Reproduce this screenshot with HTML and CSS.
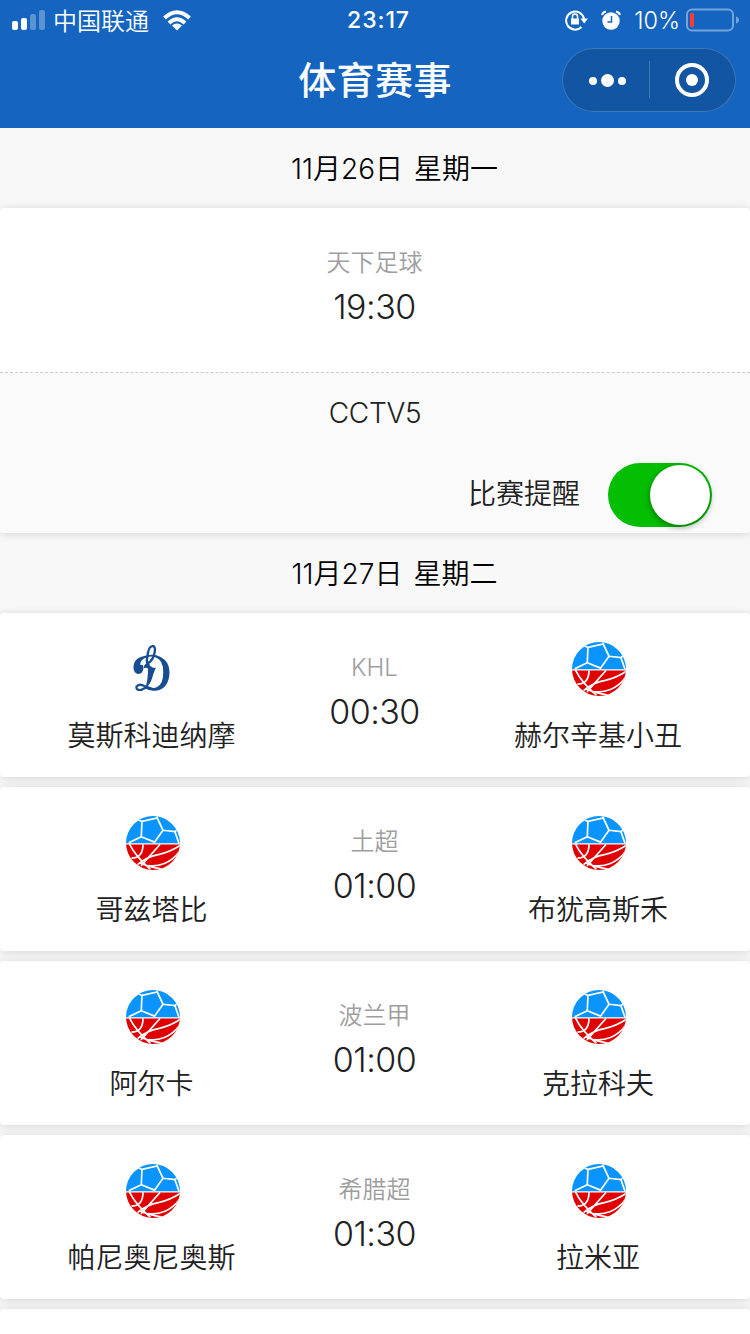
FILE: index.html
```html
<!DOCTYPE html>
<html lang="zh-CN">
<head>
<meta charset="utf-8">
<title>体育赛事</title>
<link rel="stylesheet" href="styles.css">
</head>
<body>
<svg class="defs" width="0" height="0">
  <defs>
    <clipPath id="disc"><circle cx="79.5" cy="79.5" r="79.5"/></clipPath>
    <symbol id="ball" viewBox="0 0 159 159">
      <g clip-path="url(#disc)">
        <path fill="#0a94ff" d="M0 0h159v80H0z"/>
        <path fill="#e00000" d="M0 84h159v75H0z"/>
        <g fill="none" stroke="#fff" stroke-width="5">
          <path d="M47 16L92 6L109 42L84 77L45 61zM45 61L8 79M47 16L30 8M92 6L93-2M109 42L144 46L158 34M144 46L156 80"/>
          <path d="M10 82Q28 119 72 157M50 83Q50 124 16 124M100 84L44 147M34 143Q60 120 98 113Q134 104 160 86M66 146Q90 149 113 140Q140 129 158 104M38 137Q68 151 106 156"/>
        </g>
      </g>
    </symbol>
  </defs>
</svg>
<div class="screen">
  <header class="header">
    <div class="status">
      <svg class="signal" width="34" height="20" viewBox="0 0 34 20"><g fill="#fff"><rect y="11" width="6" height="9" rx="2"/><rect x="9" y="8" width="6" height="12" rx="2"/><g opacity=".3"><rect x="18" y="4" width="6" height="16" rx="2"/><rect x="27" width="6" height="20" rx="2"/></g></g></svg>
      <span class="carrier">中国联通</span>
      <svg class="wifi" width="28" height="21" viewBox="0 0 28 21"><g fill="none" stroke="#fff" stroke-width="4"><path d="M1.500 8Q14-3.500 26.500 8"/><path d="M6 13Q14 5.500 22 13"/></g><path fill="#fff" d="M9 15.500Q14 11.500 19 15.500L14 20.500z"/></svg>
      <span class="clock">23:17</span>
      <div class="indicators">
        <svg width="24" height="22" viewBox="0 0 24 22"><path fill="none" stroke="#fff" stroke-width="2" d="M16.500 18A9 9 0 1 1 19 10"/><path fill="#fff" d="M15.500 9.500h7.500l-3.800 5zM6 9.500h8v6H6z"/><path fill="none" stroke="#fff" stroke-width="1.500" d="M7.500 10V7.500a2.500 2.500 0 0 1 5 0V10"/></svg>
        <svg class="alarm" width="20" height="20" viewBox="0 0 20 20"><circle cx="10" cy="11" r="8.700" fill="#fff"/><path fill="none" stroke="#fff" stroke-width="2" d="M1 5Q2 2 5 1.500M15 1.500Q18 2 19 5"/><path fill="none" stroke="#1565c0" stroke-width="1.500" d="M10.500 6v6H6.500"/></svg>
        <span class="percent">10%</span>
        <svg width="54" height="24" viewBox="0 0 54 24"><rect x="1" y="1.500" width="46" height="21" rx="5" fill="none" stroke="#73a3d9" stroke-width="2"/><rect x="4" y="5" width="4" height="14" rx="1.500" fill="#ff3b30"/><path fill="#73a3d9" d="M50 8.500q3 1 3 3.500t-3 3.500z"/></svg>
      </div>
    </div>
    <h1 class="title">体育赛事</h1>
    <div class="capsule">
      <svg width="174" height="64" viewBox="0 0 174 64"><g fill="#fff"><circle cx="31" cy="33" r="4"/><circle cx="45.500" cy="32.500" r="6.500"/><circle cx="60" cy="33" r="4"/><circle cx="130" cy="32" r="6"/></g><circle cx="130" cy="32" r="15" fill="none" stroke="#fff" stroke-width="4"/><path stroke="#4178b8" d="M87.500 13v37"/></svg>
    </div>
  </header>

  <h2 class="date"><span>11月26日</span><span>星期一</span></h2>
  <article class="card">
    <div class="match">
      <div class="team"></div>
      <div class="info"><span class="league">天下足球</span><time>19:30</time></div>
      <div class="team"></div>
    </div>
    <div class="broadcast">
      <span class="channel">CCTV5</span>
      <div class="remind"><span class="remind-label">比赛提醒</span><div class="switch"><div class="knob"></div></div></div>
    </div>
  </article>

  <h2 class="date"><span>11月27日</span><span>星期二</span></h2>
  <div class="list">
    <article class="card match">
      <div class="team">
        <svg class="dynamo" viewBox="0 0 109 139"><g fill="#174e91"><path fill-rule="evenodd" d="M38 32Q62 25 82 36Q109 50 109 82Q107 137 62 138Q45 138 34 131L44 126Q58 132 70 128Q90 119 90 82Q90 46 68 38Q54 32 41 37Q20 44 20 60Q31 57 30 70Q29 85 16 88Q0 86 0 67Q1 43 22 36z"/><path d="M33 61Q40 50 49 62Q60 72 68 68Q61 83 56 101Q50 121 36 129Q44 107 44 72Q39 67 31 70z"/></g><g fill="none" stroke="#174e91" stroke-width="7"><path d="M48 63Q37 57 42 36Q45 5 55 4Q68 0 64 22Q60 47 42 56"/><path d="M43 122Q35 133 22 136Q8 137 9 126Q17 115 33 124L62 135"/></g></svg>
        <span>莫斯科迪纳摩</span>
      </div>
      <div class="info"><span class="league">KHL</span><time>00:30</time></div>
      <div class="team"><svg class="ball"><use href="#ball"/></svg><span>赫尔辛基小丑</span></div>
    </article>
    <article class="card match">
      <div class="team"><svg class="ball"><use href="#ball"/></svg><span>哥兹塔比</span></div>
      <div class="info"><span class="league">土超</span><time>01:00</time></div>
      <div class="team"><svg class="ball"><use href="#ball"/></svg><span>布犹高斯禾</span></div>
    </article>
    <article class="card match">
      <div class="team"><svg class="ball"><use href="#ball"/></svg><span>阿尔卡</span></div>
      <div class="info"><span class="league">波兰甲</span><time>01:00</time></div>
      <div class="team"><svg class="ball"><use href="#ball"/></svg><span>克拉科夫</span></div>
    </article>
    <article class="card match">
      <div class="team"><svg class="ball"><use href="#ball"/></svg><span>帕尼奥尼奥斯</span></div>
      <div class="info"><span class="league">希腊超</span><time>01:30</time></div>
      <div class="team"><svg class="ball"><use href="#ball"/></svg><span>拉米亚</span></div>
    </article>
    <article class="card match"></article>
  </div>
</div>
</body>
</html>
```
FILE: styles.css
```css
* { box-sizing: border-box; }
body { margin: 0; background: #f8f8f8; color: #212121; font-family: Inter, "Noto Sans CJK SC", sans-serif; font-weight: 350; }
svg { display: block; flex: none; }
.defs { position: absolute; }
.screen { width: 750px; height: 1334px; overflow: hidden; }
.header { position: relative; height: 128px; background: #1565c0; color: #fff; }
.status { position: relative; display: flex; align-items: center; height: 40px; padding: 0 10px 0 12px; }
.carrier { margin-left: 7px; padding-top: 3px; font-size: 24px; line-height: 40px; }
.wifi { margin-left: 14px; }
.clock { position: absolute; left: 0; right: 0; text-align: center; font-size: 23px; line-height: 42px; font-weight: 550; letter-spacing: .9px; padding-left: 7px; }
.indicators { display: flex; align-items: center; margin-left: auto; }
.alarm { margin-left: 12px; }
.percent { margin: 0 6px 0 13px; padding-top: 2px; font-size: 23.5px; line-height: 40px; font-weight: 350; }
.title { margin: 0; text-align: center; font-size: 38px; line-height: 80px; font-weight: 500; letter-spacing: .4px; }
.capsule { position: absolute; left: 562px; top: 48px; width: 174px; height: 64px; border-radius: 32px; background: #1256a3; box-shadow: inset 0 0 0 1px #4178b8; }
.date { display: flex; justify-content: center; gap: 11px; height: 80px; margin: 0; padding-left: 39px; color: #000; font-size: 28px; font-weight: 350; line-height: 82px; }
.card { background: #fff; border-radius: 4px; box-shadow: 0 1px 10px rgba(0, 0, 0, .15); }
.match { display: grid; grid-template-columns: 303px 143px 1fr; height: 164px; }
.team { display: flex; flex-direction: column; align-items: center; padding-top: 29px; font-size: 28px; line-height: 40px; }
.ball { width: 54px; height: 54px; margin: 0 0 20px 2px; }
.dynamo { width: 37px; height: 46px; margin: 3px 0 25px; }
.info { display: flex; flex-direction: column; align-items: center; padding-top: 37px; }
.league { color: #9e9e9e; font-size: 24px; line-height: 36px; }
.info time { font-size: 34px; line-height: 52px; letter-spacing: -.5px; }
.broadcast { height: 161px; border-top: 1px dashed #ccc; border-radius: 0 0 4px 4px; background: #fafafa; }
.channel { display: block; height: 80px; text-align: center; font-size: 28px; line-height: 81px; letter-spacing: -.3px; }
.remind { display: flex; justify-content: flex-end; align-items: center; gap: 28px; height: 80px; padding-right: 38px; font-size: 28px; line-height: 80px; }
.remind-label { padding-top: 2px; }
.switch { width: 104px; height: 64px; margin-top: 3px; padding: 2px; border-radius: 32px; background: #04be02; }
.knob { width: 60px; height: 60px; margin-left: auto; border-radius: 50%; background: #fff; box-shadow: 0 2px 6px rgba(0, 0, 0, .4); }
.list { display: flex; flex-direction: column; gap: 10px; }
```
